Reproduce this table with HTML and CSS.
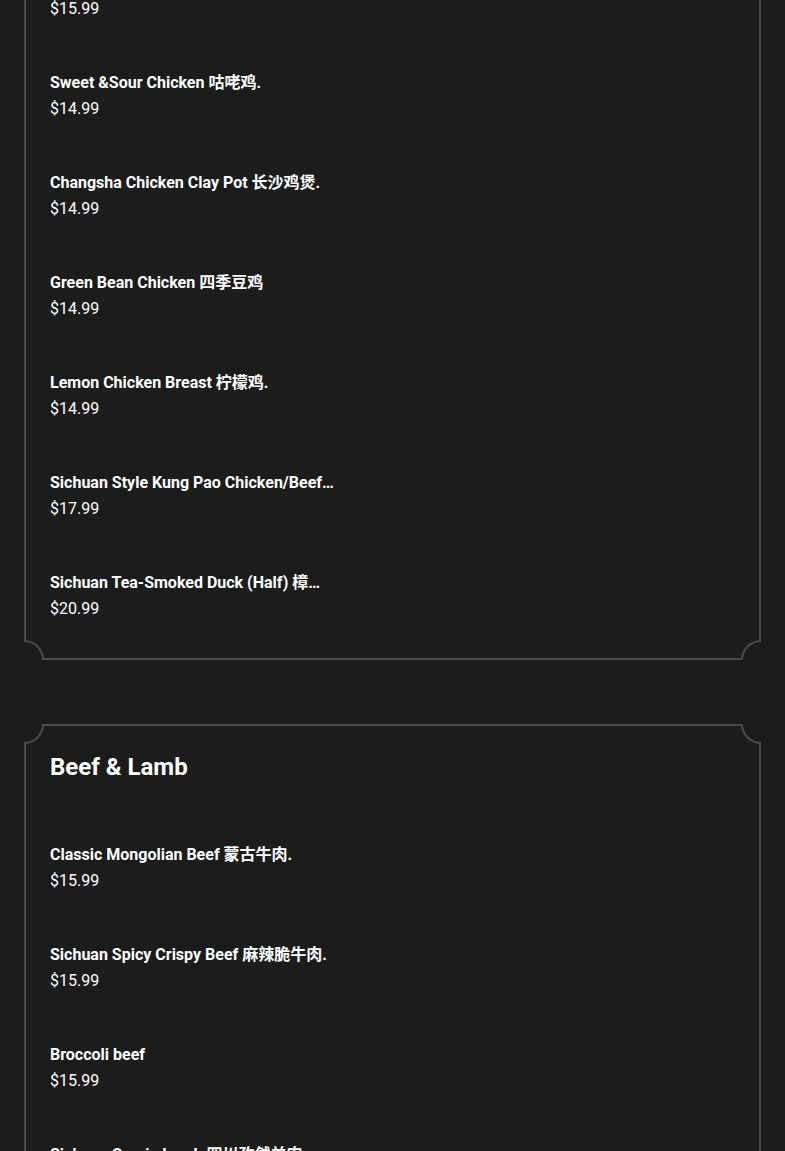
FILE: index.html
```html
<!DOCTYPE html>
<html lang="en">
<head>
<meta charset="utf-8">
<title>Menu</title>
<link rel="stylesheet" href="styles.css">
</head>
<body>
<main class="menu">
  <section class="card card-first">
    <span class="corner tl"></span><span class="corner tr"></span><span class="corner bl"></span><span class="corner br"></span>
    <ul class="items">
      <li class="item"><span class="name">General Tso's Chicken 左宗棠鸡.</span><span class="price">$15.99</span></li>
      <li class="item"><span class="name">Sweet &amp;Sour Chicken 咕咾鸡.</span><span class="price">$14.99</span></li>
      <li class="item"><span class="name">Changsha Chicken Clay Pot 长沙鸡煲.</span><span class="price">$14.99</span></li>
      <li class="item"><span class="name">Green Bean Chicken 四季豆鸡</span><span class="price">$14.99</span></li>
      <li class="item"><span class="name">Lemon Chicken Breast 柠檬鸡.</span><span class="price">$14.99</span></li>
      <li class="item"><span class="name">Sichuan Style Kung Pao Chicken/Beef/Shrimp 宫保鸡丁.</span><span class="price">$17.99</span></li>
      <li class="item"><span class="name">Sichuan Tea-Smoked Duck (Half) 樟茶鸭半只.</span><span class="price">$20.99</span></li>
    </ul>
  </section>
  <section class="card">
    <span class="corner tl"></span><span class="corner tr"></span><span class="corner bl"></span><span class="corner br"></span>
    <h2 class="title">Beef &amp; Lamb</h2>
    <ul class="items">
      <li class="item"><span class="name">Classic Mongolian Beef 蒙古牛肉.</span><span class="price">$15.99</span></li>
      <li class="item"><span class="name">Sichuan Spicy Crispy Beef 麻辣脆牛肉.</span><span class="price">$15.99</span></li>
      <li class="item"><span class="name">Broccoli beef</span><span class="price">$15.99</span></li>
      <li class="item"><span class="name">Sichuan Cumin Lamb 四川孜然羊肉</span><span class="price">$17.99</span></li>
      <li class="item"><span class="name">Sichuan Boiled Beef 水煮牛肉.</span><span class="price">$17.99</span></li>
    </ul>
  </section>
</main>
</body>
</html>
```

FILE: styles.css
```css
* { box-sizing: border-box; }
html, body {
  margin: 0;
  padding: 0;
  background: #1c1c1c;
  color: #ffffff;
  font-family: Roboto, "Noto Sans CJK SC", sans-serif;
}
.menu {
  display: flex;
  flex-direction: column;
  gap: 64px;
  padding: 0 24px 40px;
}
.card {
  position: relative;
  border: 2px solid #4b4b4b;
  padding: 25px 24px 36px;
}
.card-first {
  margin-top: -57px;
}
.corner {
  position: absolute;
  width: 20px;
  height: 20px;
  background: #1c1c1c;
  border: 0 solid #4b4b4b;
}
.corner.tl { top: -2px; left: -2px; border-right-width: 2px; border-bottom-width: 2px; border-bottom-right-radius: 20px; }
.corner.tr { top: -2px; right: -2px; border-left-width: 2px; border-bottom-width: 2px; border-bottom-left-radius: 20px; }
.corner.bl { bottom: -2px; left: -2px; border-right-width: 2px; border-top-width: 2px; border-top-right-radius: 20px; }
.corner.br { bottom: -2px; right: -2px; border-left-width: 2px; border-top-width: 2px; border-top-left-radius: 20px; }
.title {
  margin: 0 0 59px;
  font-size: 24px;
  line-height: 32px;
  font-weight: 700;
}
.items {
  list-style: none;
  margin: 0;
  padding: 0;
  display: flex;
  flex-direction: column;
  gap: 48px;
}
.item {
  display: flex;
  flex-direction: column;
}
.name {
  font-size: 16px;
  line-height: 26px;
  font-weight: 700;
  max-width: 286px;
  white-space: nowrap;
  overflow: hidden;
  text-overflow: ellipsis;
}
.price {
  font-size: 16px;
  line-height: 26px;
  font-weight: 400;
}
```
